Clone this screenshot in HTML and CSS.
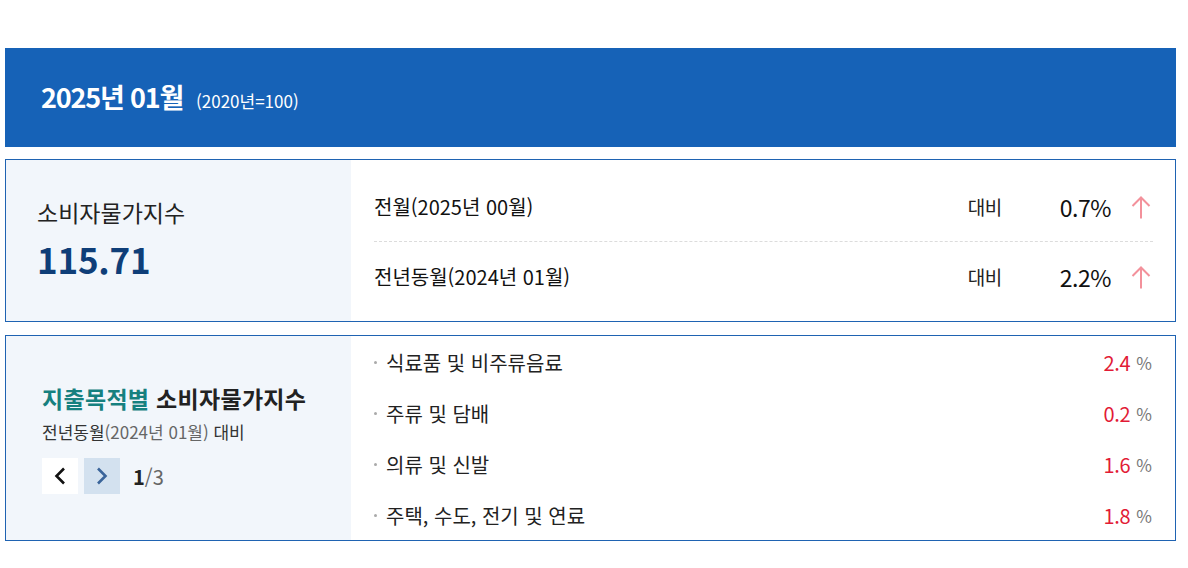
FILE: index.html
```html
<!DOCTYPE html>
<html lang="ko">
<head>
<meta charset="utf-8">
<title>소비자물가지수</title>
<link rel="stylesheet" href="styles.css">
</head>
<body>
<div class="wrap">
  <div class="head">
    <h2 class="head-title">2025년 01월</h2>
    <span class="head-sub">(2020년=100)</span>
  </div>

  <div class="card card-cpi">
    <div class="card-side side-cpi">
      <p class="side-label">소비자물가지수</p>
      <p class="side-value">115.71</p>
    </div>
    <ul class="cmp-list">
      <li class="cmp-row">
        <span class="cmp-name">전월(2025년 00월)</span>
        <span class="cmp-vs">대비</span>
        <span class="cmp-val">0.7%</span>
        <svg class="arrow-up" viewBox="0 0 24 24" width="24" height="24"><path d="M12 2.5V23.5M3.5 11L12 2.5L20.5 11" fill="none" stroke="#f3919b" stroke-width="2"/></svg>
      </li>
      <li class="cmp-row">
        <span class="cmp-name">전년동월(2024년 01월)</span>
        <span class="cmp-vs">대비</span>
        <span class="cmp-val">2.2%</span>
        <svg class="arrow-up" viewBox="0 0 24 24" width="24" height="24"><path d="M12 2.5V23.5M3.5 11L12 2.5L20.5 11" fill="none" stroke="#f3919b" stroke-width="2"/></svg>
      </li>
    </ul>
  </div>

  <div class="card card-cat">
    <div class="card-side side-cat">
      <h3 class="cat-title"><span class="cat-accent">지출목적별</span> 소비자물가지수</h3>
      <p class="cat-sub">전년동월<span class="cat-sub-date">(2024년 01월)</span> 대비</p>
      <div class="pager">
        <button class="pager-btn pager-prev" type="button" aria-label="이전">
          <svg viewBox="0 0 12 18" width="12" height="18"><path d="M10 1.5L2.5 9L10 16.5" fill="none" stroke="#111" stroke-width="2.6"/></svg>
        </button>
        <button class="pager-btn pager-next" type="button" aria-label="다음">
          <svg viewBox="0 0 12 18" width="12" height="18"><path d="M2 1.5L9.5 9L2 16.5" fill="none" stroke="#3a649a" stroke-width="2.6"/></svg>
        </button>
        <span class="pager-count"><b>1</b>/3</span>
      </div>
    </div>
    <ul class="cat-list">
      <li class="cat-row"><span class="cat-name">식료품 및 비주류음료</span><span class="cat-val">2.4</span><span class="cat-unit">%</span></li>
      <li class="cat-row"><span class="cat-name">주류 및 담배</span><span class="cat-val">0.2</span><span class="cat-unit">%</span></li>
      <li class="cat-row"><span class="cat-name">의류 및 신발</span><span class="cat-val">1.6</span><span class="cat-unit">%</span></li>
      <li class="cat-row"><span class="cat-name">주택, 수도, 전기 및 연료</span><span class="cat-val">1.8</span><span class="cat-unit">%</span></li>
    </ul>
  </div>
</div>
</body>
</html>
```

FILE: styles.css
```css
* { box-sizing: border-box; }
html, body { margin: 0; padding: 0; background: #fff; }
body {
  font-family: "Noto Sans CJK KR", "Noto Sans", sans-serif;
  color: #222;
}
p, h2, h3, ul { margin: 0; padding: 0; }
ul { list-style: none; }

.wrap {
  width: 1171px;
  margin: 48px 0 0 5px;
}

/* header */
.head {
  height: 99px;
  background: #1662b7;
  display: flex;
  align-items: baseline;
  padding: 0 0 0 36px;
  line-height: 97px;
}
.head-title {
  font-size: 27px;
  font-weight: 700;
  color: #fff;
  letter-spacing: -1.2px;
}
.head-sub {
  margin-left: 13px;
  font-size: 17px;
  color: #fff;
}

/* cards */
.card {
  border: 1px solid #1f63b2;
  display: flex;
}
.card-cpi { margin-top: 12px; height: 163px; }
.card-cat { margin-top: 13px; height: 206px; }

.card-side {
  width: 345px;
  flex: none;
  background: #f2f6fb;
  display: flex;
  flex-direction: column;
}
.side-cpi { padding: 37px 0 0 31px; }
.side-label {
  font-size: 23px;
  line-height: 30px;
  color: #222;
}
.side-value {
  margin-top: 10px;
  font-size: 35px;
  line-height: 44px;
  font-weight: 700;
  color: #0f3e78;
  letter-spacing: -0.2px;
}

/* comparison rows */
.cmp-list {
  flex: 1;
  padding: 12px 22px 10px 23px;
}
.cmp-row {
  height: 69px;
  display: flex;
  align-items: center;
}
.cmp-row + .cmp-row {
  height: 70px;
  border-top: 1px dashed #dcdcdc;
}
.cmp-name {
  flex: 1;
  font-size: 20px;
  color: #111;
}
.cmp-vs {
  font-size: 19px;
  color: #222;
  letter-spacing: -0.3px;
}
.cmp-val {
  width: 70px;
  margin-left: 39px;
  text-align: right;
  font-size: 23px;
  color: #111;
  letter-spacing: -0.5px;
}
.arrow-up {
  margin-left: 18px;
  flex: none;
}

/* category card */
.side-cat {
  padding: 47px 0 0 36px;
}
.cat-title {
  font-size: 23px;
  line-height: 30px;
  font-weight: 700;
  color: #222;
  letter-spacing: 0.3px;
}
.cat-accent { color: #16807f; }
.cat-sub {
  margin-top: 8px;
  font-size: 17px;
  line-height: 22px;
  color: #333;
}
.cat-sub-date { color: #666; }

.pager {
  margin-top: 15px;
  display: flex;
  align-items: center;
}
.pager-btn {
  width: 36px;
  height: 36px;
  border: 0;
  padding: 0;
  display: flex;
  align-items: center;
  justify-content: center;
  cursor: pointer;
}
.pager-prev { background: #fff; }
.pager-next { background: #d3e1ef; margin-left: 6px; }
.pager-count {
  margin-left: 13px;
  font-size: 20px;
  color: #666;
}
.pager-count b { font-weight: 700; color: #222; }

.cat-list {
  flex: 1;
  padding: 1px 23px 0 23px;
}
.cat-row {
  height: 51px;
  display: flex;
  align-items: center;
}
.cat-row::before {
  content: "";
  width: 3px;
  height: 3px;
  border-radius: 50%;
  background: #aaa;
  margin-right: 9px;
  flex: none;
}
.cat-name {
  flex: 1;
  font-size: 20px;
  color: #222;
}
.cat-val {
  font-size: 20px;
  color: #e21b36;
  letter-spacing: -0.3px;
}
.cat-unit {
  margin-left: 6px;
  font-size: 17px;
  color: #777;
}
```
